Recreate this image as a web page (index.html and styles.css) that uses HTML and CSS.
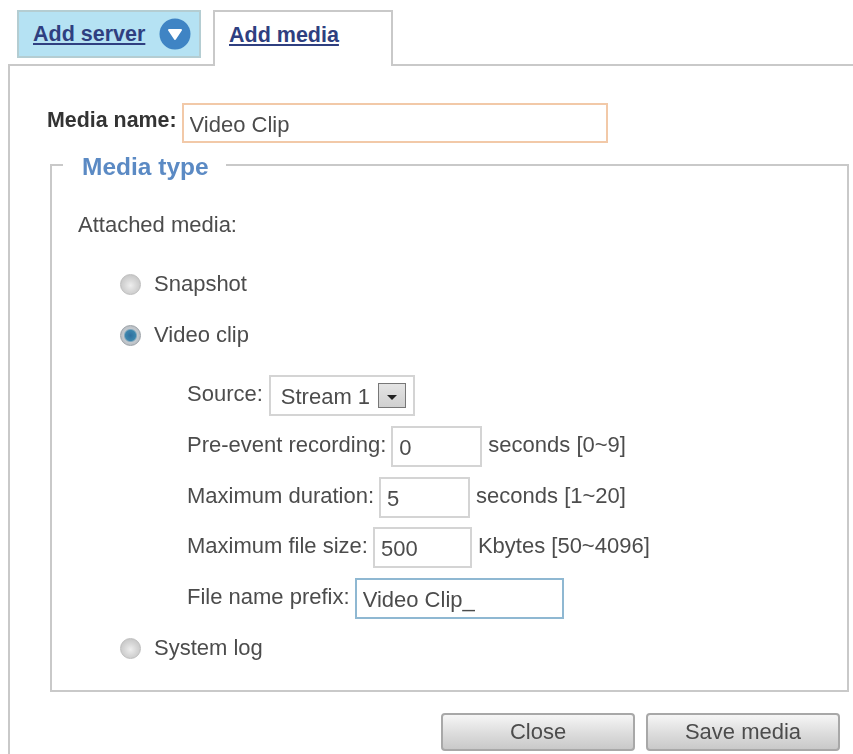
FILE: index.html
```html
<!DOCTYPE html>
<html lang="en">
<head>
    <meta charset="UTF-8">
    <title>Add media</title>
    <link rel="stylesheet" href="styles.css">
</head>
<body>
    <div class="tabs">
        <div class="tab tab-inactive">
            <a href="#">Add server</a>
            <svg class="tab-icon" width="32" height="32" viewBox="0 0 32 32">
                <circle cx="16" cy="16" r="15.5" fill="#3f84c4"/>
                <path d="M10 12h12l-6 9z" fill="#fff" stroke="#fff" stroke-width="2" stroke-linejoin="round"/>
            </svg>
        </div>
        <div class="tab tab-active">
            <a href="#">Add media</a>
        </div>
    </div>

    <div class="panel">
        <div class="name-row">
            <label class="name-label" for="mediaName">Media name:</label>
            <input class="text-input name-input" type="text" id="mediaName" value="Video Clip">
        </div>

        <fieldset class="media-type">
            <legend>Media type</legend>
            <p class="attached">Attached media:</p>

            <label class="radio-row radio-first">
                <input type="radio" name="media" value="snapshot">
                <span>Snapshot</span>
            </label>
            <label class="radio-row">
                <input type="radio" name="media" value="video" checked>
                <span>Video clip</span>
            </label>

            <div class="options">
                <div class="option-row">
                    <span>Source:</span>
                    <div class="select">
                        <span>Stream 1</span>
                        <span class="select-arrow"></span>
                    </div>
                </div>
                <div class="option-row">
                    <label for="preEvent">Pre-event recording:</label>
                    <input class="text-input small-input" type="text" id="preEvent" value="0">
                    <span>seconds [0~9]</span>
                </div>
                <div class="option-row">
                    <label for="maxDuration">Maximum duration:</label>
                    <input class="text-input small-input" type="text" id="maxDuration" value="5">
                    <span>seconds [1~20]</span>
                </div>
                <div class="option-row">
                    <label for="maxSize">Maximum file size:</label>
                    <input class="text-input size-input" type="text" id="maxSize" value="500">
                    <span>Kbytes [50~4096]</span>
                </div>
                <div class="option-row">
                    <label for="prefix">File name prefix:</label>
                    <input class="text-input prefix-input" type="text" id="prefix" value="Video Clip_">
                </div>
            </div>

            <label class="radio-row radio-last">
                <input type="radio" name="media" value="log">
                <span>System log</span>
            </label>
        </fieldset>

        <div class="actions">
            <button type="button">Close</button>
            <button type="button">Save media</button>
        </div>
    </div>
</body>
</html>
```

FILE: styles.css
```css
:root {
    --border-color: #c9c9c9;
    --text-color: #4c4c4c;
    --link-color: #2f3f80;
}

html, body {
    height: 100%;
}

body {
    margin: 0;
    padding-top: 10px;
    box-sizing: border-box;
    overflow: hidden;
    background-color: #ffffff;
    color: var(--text-color);
    font-family: "Liberation Sans", Arial, sans-serif;
    font-size: 22px;
    filter: blur(0.5px);
}

.tabs {
    display: flex;
    align-items: flex-start;
    gap: 12px;
    margin-left: 17px;
    position: relative;
    z-index: 1;
}

.tab a {
    color: var(--link-color);
    font-size: 21.5px;
    font-weight: bold;
}

.tab-inactive {
    display: flex;
    align-items: center;
    gap: 14px;
    box-sizing: border-box;
    width: 184px;
    height: 48px;
    padding-left: 14px;
    background-color: #b5e2f3;
    border: 2px solid #b4cdd2;
}

.tab-active {
    box-sizing: border-box;
    width: 180px;
    height: 56px;
    padding: 10px 0 0 14px;
    background-color: #ffffff;
    border: 2px solid var(--border-color);
    border-bottom: none;
}

.panel {
    box-sizing: border-box;
    height: 700px;
    margin: -2px 0 0 8px;
    padding: 37px 4px 0 37px;
    border-top: 2px solid var(--border-color);
    border-left: 2px solid var(--border-color);
}

.name-row {
    display: flex;
    align-items: center;
    gap: 5px;
}

.name-label {
    color: #333333;
    font-size: 21.4px;
    font-weight: bold;
    margin-bottom: 5px;
}

.text-input {
    box-sizing: border-box;
    height: 41px;
    padding: 3px 6px 0;
    background-color: #ffffff;
    border: 2px solid #d4d4d4;
    color: var(--text-color);
    font-family: inherit;
    font-size: 22px;
    outline: none;
}

.name-input {
    width: 426px;
    height: 40px;
    border-color: #f2c9a8;
}

.small-input {
    width: 91px;
}

.size-input {
    width: 99px;
}

.prefix-input {
    width: 209px;
    border-color: #8fb8d2;
}

.media-type {
    box-sizing: border-box;
    height: 543px;
    margin: 6px 0 0 3px;
    padding: 0 0 0 26px;
    border: 2px solid var(--border-color);
    min-width: 0;
}

.media-type legend {
    margin-left: -15px;
    padding: 4px 17px 0 19px;
    color: #5b8ac4;
    font-size: 24.5px;
    font-weight: bold;
}

.attached {
    margin: 31px 0 0;
}

.radio-row {
    display: flex;
    align-items: center;
    gap: 13px;
    margin: 27px 0 0 42px;
    height: 24px;
}

.radio-first {
    margin-top: 34px;
}

.radio-row input {
    -webkit-appearance: none;
    appearance: none;
    width: 21px;
    height: 21px;
    margin: 0;
    border-radius: 50%;
    border: 1px solid #bdbdbd;
    background: radial-gradient(circle at 50% 55%, #eeeeee 0%, #d6d6d6 45%, #bcbcbc 100%);
}

.radio-row input:checked {
    background: radial-gradient(circle, #2f6f9f 0%, #3d86ad 38%, #c4c9ce 52%, #aab0b6 100%);
    border-color: #9aa0a6;
}

.options {
    display: flex;
    flex-direction: column;
    gap: 9.75px;
    margin: 28px 0 0 109px;
}

.option-row {
    display: flex;
    align-items: center;
    gap: 5px;
    height: 41px;
}

.small-input + span,
.size-input + span {
    margin-left: 1px;
    margin-bottom: 3px;
}

.option-row > label,
.option-row > span:first-child {
    margin-bottom: 3px;
}

.select {
    display: flex;
    align-items: center;
    gap: 8px;
    box-sizing: border-box;
    height: 41px;
    width: 146px;
    margin-left: 1px;
    padding: 3px 0 0 10px;
    border: 2px solid #d4d4d4;
}

.select-arrow {
    position: relative;
    box-sizing: border-box;
    flex: none;
    width: 28px;
    height: 25px;
    margin-top: -3px;
    background: linear-gradient(#e4e4e4, #d0d0d0);
    border: 1px solid #777777;
}

.select-arrow:before {
    content: "";
    position: absolute;
    left: 8px;
    top: 11px;
    border-left: 5px solid transparent;
    border-right: 5px solid transparent;
    border-top: 5px solid #222222;
}

.radio-last {
    margin-top: 17px;
}

.actions {
    display: flex;
    justify-content: flex-end;
    gap: 11px;
    margin: 21px 9px 0 0;
}

.actions button {
    width: 194px;
    height: 38px;
    padding: 0;
    border: 2px solid #a8a8a8;
    border-radius: 4px;
    background: linear-gradient(#f6f6f6, #dcdcdc 55%, #c9c9c9);
    color: var(--text-color);
    font-family: inherit;
    font-size: 22px;
}
```
